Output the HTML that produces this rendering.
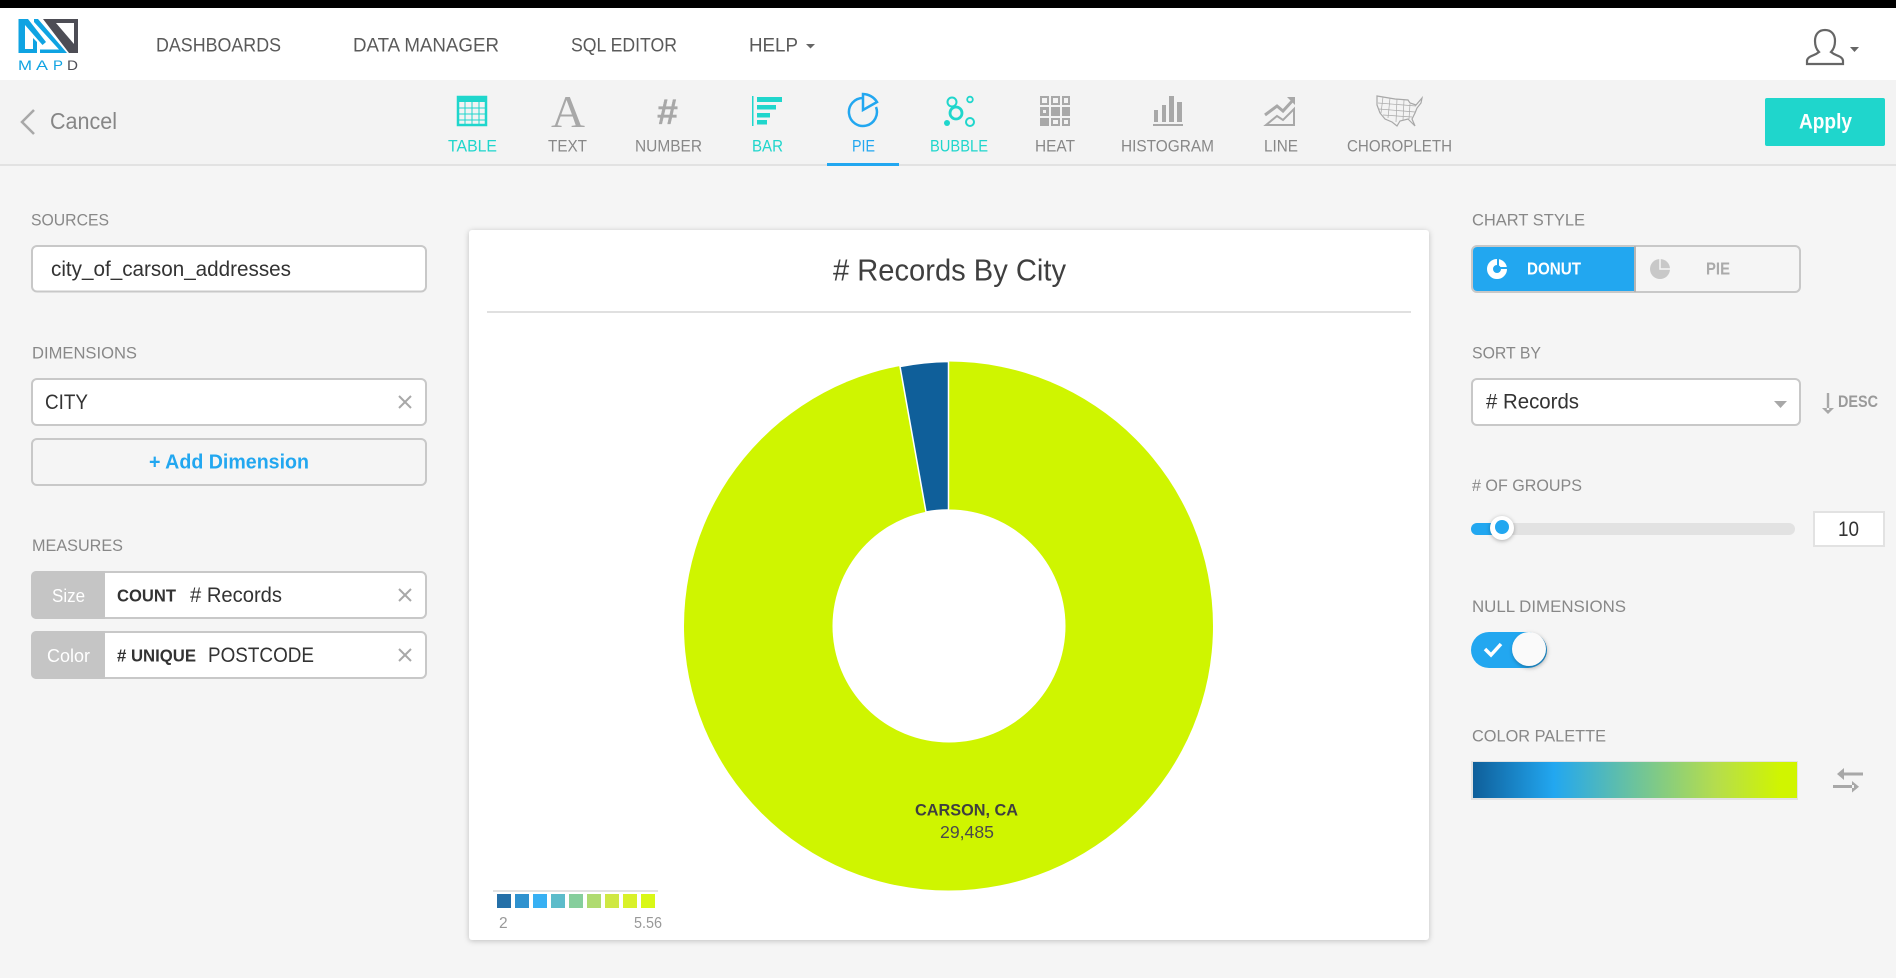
<!DOCTYPE html>
<html lang="en">
<head>
<meta charset="utf-8">
<title>MapD Chart Editor</title>
<style>
html,body{margin:0;padding:0;background:#f4f4f4;width:1896px;height:978px;overflow:hidden}
svg{display:block}
text{font-family:"Liberation Sans",sans-serif;font-size:16px;white-space:pre}
.nav{font-size:19.500px;fill:#5a5a5a}
.lab{font-size:17px;fill:#888}
.tb{font-size:17px;fill:#888}
.tl{fill:#1fd6cc}
.val{font-size:21.500px;fill:#333}
.b{font-weight:bold}
.box{fill:#fff;stroke:#c8c8c8;stroke-width:2}
.x{stroke:#a8a8a8;stroke-width:2;fill:none}
</style>
</head>
<body>
<svg width="1896" height="978" viewBox="0 0 1896 978" xmlns="http://www.w3.org/2000/svg">
<rect width="1896" height="978" fill="#f5f5f5"/>
<rect width="1896" height="8" fill="#000"/>
<rect y="8" width="1896" height="72" fill="#fff"/>
<rect y="80" width="1896" height="84" fill="#f3f3f3"/>
<rect y="164" width="1896" height="2" fill="#e2e2e2"/>

<!-- logo -->
<path fill="#4d4d55" fill-rule="evenodd" d="M43 19H78V53H69ZM56 23L74 44V23Z"/>
<path fill="#0fa3e2" d="M18.500 19H28L46 42L42.500 45L25 25V49H33V38L37 42V53H18.500Z"/>
<path fill="#0fa3e2" d="M34 19H38L67 53H40V49.500H59L34 22Z"/>
<text x="18" y="70" style="font-size:14px;fill:#0fa3e2" textLength="14" lengthAdjust="spacingAndGlyphs">M</text>
<text x="36" y="70" style="font-size:14px;fill:#0fa3e2" textLength="12" lengthAdjust="spacingAndGlyphs">A</text>
<text x="53" y="70" style="font-size:14px;fill:#0fa3e2" textLength="10" lengthAdjust="spacingAndGlyphs">P</text>
<text x="67" y="70" style="font-size:14px;fill:#4d4d55" textLength="11" lengthAdjust="spacingAndGlyphs">D</text>

<!-- nav -->
<text class="nav" x="156" y="51.500" textLength="125" lengthAdjust="spacingAndGlyphs">DASHBOARDS</text>
<text class="nav" x="353" y="51.500" textLength="146" lengthAdjust="spacingAndGlyphs">DATA MANAGER</text>
<text class="nav" x="571" y="51.500" textLength="106" lengthAdjust="spacingAndGlyphs">SQL EDITOR</text>
<text class="nav" x="749" y="51.500" textLength="49" lengthAdjust="spacingAndGlyphs">HELP</text>
<path d="M806 44h9l-4.500 4.500z" fill="#666"/>

<!-- user -->
<path fill="none" stroke="#666" stroke-width="2.200" d="M1807 64v-3c0-4 5-5 9-7l3-2c-3-3-4-7-4-11c0-7 4-11 10-11s10 4 10 11c0 4-1 8-4 11l3 2c4 2 9 3 9 7v3z"/>
<path d="M1850 47h9l-4.500 5z" fill="#666"/>

<!-- cancel -->
<path d="M34 110L22 122L34 134" fill="none" stroke="#a8a8a8" stroke-width="2.500"/>
<text x="50" y="129" style="font-size:23.500px;fill:#868686" textLength="67" lengthAdjust="spacingAndGlyphs">Cancel</text>

<!-- toolbar icons -->
<g fill="none" stroke="#1fd6cc">
  <rect x="458" y="97" width="28" height="28" stroke-width="2.500"/>
  <rect x="458" y="97" width="28" height="4" fill="#1fd6cc" stroke-width="2"/>
  <path stroke-width="1" d="M465 101v24M472 101v24M479 101v24M458 108h28M458 114h28M458 120h28"/>
</g>
<text x="551" y="127" style="font-family:'Liberation Serif',serif;font-size:46px" fill="#a8a8a8" textLength="34" lengthAdjust="spacingAndGlyphs">A</text>
<text x="657" y="124" style="font-size:35px;font-weight:bold" fill="#a8a8a8" stroke="#a8a8a8" stroke-width=".3" textLength="21" lengthAdjust="spacingAndGlyphs">#</text>
<g fill="#1fd6cc">
  <rect x="752" y="96" width="1.500" height="30"/>
  <rect x="757" y="97" width="25" height="5"/>
  <rect x="757" y="105" width="19" height="4.500"/>
  <rect x="757" y="113" width="13" height="4.500"/>
  <rect x="757" y="120" width="10" height="4.500"/>
</g>
<g fill="none" stroke="#22a7f0" stroke-width="2.500">
  <path d="M863 98A14 14 0 1 0 876 107"/>
  <path d="M863 110V94A17 17 0 0 1 877 102Z"/>
</g>
<g fill="none" stroke="#1fd6cc">
  <circle cx="952" cy="102" r="4.500" stroke-width="2"/>
  <circle cx="970" cy="99.500" r="2.800" stroke-width="1.800"/>
  <circle cx="956" cy="113" r="6" stroke-width="2.800"/>
  <circle cx="970" cy="122" r="4" stroke-width="2"/>
  <circle cx="947" cy="123" r="3" fill="#1fd6cc" stroke="none"/>
</g>
<g fill="#a8a8a8">
  <path fill-rule="evenodd" d="M1040 96h9v9h-9zM1042 98v5h5v-5zM1051 96h9v9h-9zM1053 98v5h5v-5zM1062 96h8v9h-8zM1064 98v5h4v-5zM1040 107h9v9h-9zM1043 110v3h3v-3zM1051 107h9v9h-9zM1062 107h8v9h-8zM1040 118h9v8h-9zM1051 118h9v8h-9zM1053 120v4h5v-4zM1062 118h8v8h-8zM1064 120v4h4v-4z"/>
  <rect x="1153" y="124" width="30" height="2"/>
  <rect x="1154" y="110" width="4" height="12"/>
  <rect x="1162" y="105" width="4" height="17"/>
  <rect x="1169" y="96" width="5" height="26"/>
  <rect x="1177" y="102" width="5" height="20"/>
</g>
<g fill="none" stroke="#a8a8a8">
  <path stroke-width="3" d="M1265 115L1277 106L1283 111L1294 99"/>
  <path d="M1287 97L1295 97L1295 105Z" fill="#a8a8a8" stroke="none"/>
  <path stroke-width="2" d="M1266 125L1277 116L1283 120L1294 109V125Z"/>
</g>
<g fill="none" stroke="#a8a8a8">
  <path stroke-width="1.200" d="M1377 96L1395 99L1408 100L1410 103L1416 105L1422 98L1421 103L1417 108L1415 113L1412 119L1415 126L1412 123L1408 119L1400 121L1397 126L1392 122L1385 119L1380 113L1377 105Z"/>
  <path stroke-width=".7" d="M1383 97L1381 113M1390 98L1388 118M1397 99L1396 122M1404 100L1403 120M1410 104L1409 119M1378 103L1416 106M1379 109L1415 112M1383 115L1412 117"/>
</g>

<!-- toolbar labels -->
<text class="tb tl" x="448" y="151.500" textLength="49" lengthAdjust="spacingAndGlyphs">TABLE</text>
<text class="tb" x="548" y="151.500" textLength="39" lengthAdjust="spacingAndGlyphs">TEXT</text>
<text class="tb" x="635" y="151.500" textLength="67" lengthAdjust="spacingAndGlyphs">NUMBER</text>
<text class="tb tl" x="752" y="151.500" textLength="31" lengthAdjust="spacingAndGlyphs">BAR</text>
<text class="tb" x="852" y="151.500" textLength="23" lengthAdjust="spacingAndGlyphs" style="fill:#22a7f0">PIE</text>
<text class="tb tl" x="930" y="151.500" textLength="58" lengthAdjust="spacingAndGlyphs">BUBBLE</text>
<text class="tb" x="1035" y="151.500" textLength="40" lengthAdjust="spacingAndGlyphs">HEAT</text>
<text class="tb" x="1121" y="151.500" textLength="93" lengthAdjust="spacingAndGlyphs">HISTOGRAM</text>
<text class="tb" x="1264" y="151.500" textLength="34" lengthAdjust="spacingAndGlyphs">LINE</text>
<text class="tb" x="1347" y="151.500" textLength="105" lengthAdjust="spacingAndGlyphs">CHOROPLETH</text>
<rect x="827" y="163" width="72" height="3" fill="#22a7f0"/>

<!-- apply -->
<rect x="1765" y="98" width="120" height="48" rx="2" fill="#1fd6cc"/>
<text x="1799" y="128.500" class="b" fill="#fff" textLength="53" lengthAdjust="spacingAndGlyphs" style="font-size:21.500px">Apply</text>

<!-- left panel -->
<text class="lab" x="31" y="225.500" textLength="78" lengthAdjust="spacingAndGlyphs">SOURCES</text>
<rect class="box" x="32" y="246" width="394" height="45.500" rx="5"/>
<text class="val" x="51" y="276" textLength="240" lengthAdjust="spacingAndGlyphs">city_of_carson_addresses</text>

<text class="lab" x="32" y="358.500" textLength="105" lengthAdjust="spacingAndGlyphs">DIMENSIONS</text>
<rect class="box" x="32" y="379" width="394" height="46" rx="5"/>
<text class="val" x="45" y="409" textLength="43" lengthAdjust="spacingAndGlyphs">CITY</text>
<path class="x" d="M399 396l12 12M411 396l-12 12"/>
<rect x="32" y="439" width="394" height="46" rx="5" fill="none" stroke="#c8c8c8" stroke-width="2"/>
<text x="149" y="468.500" class="b" style="font-size:20.500px;fill:#22a7f0" textLength="160" lengthAdjust="spacingAndGlyphs">+ Add Dimension</text>

<text class="lab" x="32" y="551" textLength="91" lengthAdjust="spacingAndGlyphs">MEASURES</text>
<rect class="box" x="32" y="572" width="394" height="46" rx="5"/>
<path d="M36 571H105V619H36a5 5 0 0 1-5-5V576a5 5 0 0 1 5-5Z" fill="#c5c5c5"/>
<text x="52" y="602" style="font-size:18px;fill:#fff" textLength="33" lengthAdjust="spacingAndGlyphs">Size</text>
<text x="117" y="601.500" class="b" style="font-size:17.500px;fill:#333" textLength="59" lengthAdjust="spacingAndGlyphs">COUNT</text>
<text class="val" x="190" y="602" textLength="92" lengthAdjust="spacingAndGlyphs"># Records</text>
<path class="x" d="M399 589l12 12M411 589l-12 12"/>

<rect class="box" x="32" y="632" width="394" height="46" rx="5"/>
<path d="M36 631H105V679H36a5 5 0 0 1-5-5V636a5 5 0 0 1 5-5Z" fill="#c5c5c5"/>
<text x="47" y="662" style="font-size:18px;fill:#fff" textLength="43" lengthAdjust="spacingAndGlyphs">Color</text>
<text x="117" y="661.500" class="b" style="font-size:17.500px;fill:#333" textLength="79" lengthAdjust="spacingAndGlyphs"># UNIQUE</text>
<text class="val" x="208" y="662" textLength="106" lengthAdjust="spacingAndGlyphs">POSTCODE</text>
<path class="x" d="M399 649l12 12M411 649l-12 12"/>

<!-- chart card -->
<rect x="469" y="230" width="960" height="710" rx="3" fill="#fff" style="filter:drop-shadow(0 1px 3px rgba(0,0,0,.22))"/>
<text x="833" y="280.500" style="font-size:30.500px;fill:#3f3f3f" textLength="233" lengthAdjust="spacingAndGlyphs"># Records By City</text>
<rect x="487" y="311" width="924" height="2" fill="#e0e0e0"/>

<circle cx="948.500" cy="626" r="264.500" fill="#cff500"/>
<path d="M948.500 361.500A264.500 264.500 0 0 0 900 366.500L926 512A116 116 0 0 1 948.500 510Z" fill="#0f5f9a" stroke="#fff" stroke-width="1.500"/>
<circle cx="949" cy="626" r="116.500" fill="#fff"/>
<text x="915" y="815.500" class="b" style="font-size:17px;fill:#3f3f3f" textLength="103" lengthAdjust="spacingAndGlyphs">CARSON, CA</text>
<text x="940" y="838" style="font-size:17.500px;fill:#4a4a4a" textLength="54" lengthAdjust="spacingAndGlyphs">29,485</text>

<rect x="493" y="890" width="165" height="2" fill="#e2e2e2"/>
<rect x="497" y="894" width="14" height="14" fill="#2570a8"/>
<rect x="515" y="894" width="14" height="14" fill="#2f92cf"/>
<rect x="533" y="894" width="14" height="14" fill="#38b0f3"/>
<rect x="551" y="894" width="14" height="14" fill="#5cbcca"/>
<rect x="569" y="894" width="14" height="14" fill="#86ce9c"/>
<rect x="587" y="894" width="14" height="14" fill="#afdb70"/>
<rect x="605" y="894" width="14" height="14" fill="#cfe843"/>
<rect x="623" y="894" width="14" height="14" fill="#d9f129"/>
<rect x="641" y="894" width="14" height="14" fill="#d9f816"/>
<text x="499" y="928" style="font-size:15.500px;fill:#999">2</text>
<text x="634" y="928" style="font-size:15.500px;fill:#999" textLength="28" lengthAdjust="spacingAndGlyphs">5.56</text>

<!-- right panel -->
<text class="lab" x="1472" y="225.500" textLength="113" lengthAdjust="spacingAndGlyphs">CHART STYLE</text>
<rect x="1472" y="246" width="328" height="46" rx="5" fill="#f5f5f5" stroke="#c8c8c8" stroke-width="2"/>
<path d="M1477 247H1634V291H1477a4 4 0 0 1-4-4V251a4 4 0 0 1 4-4Z" fill="#22a7f0"/>
<rect x="1634" y="246" width="2" height="46" fill="#b5b5b5"/>
<circle cx="1497" cy="269" r="7" fill="none" stroke="#fff" stroke-width="6"/>
<path d="M1497 269V258h2V267h10v2Z" fill="#22a7f0"/>
<text x="1527" y="274.500" class="b" style="font-size:17.500px;fill:#fff" textLength="54" lengthAdjust="spacingAndGlyphs">DONUT</text>
<circle cx="1660" cy="269" r="10" fill="#c8c8c8"/>
<path d="M1660 259V269H1670" fill="none" stroke="#f5f5f5" stroke-width="1.500"/>
<text x="1706" y="274.500" class="b" style="font-size:17.500px;fill:#aaa" textLength="24" lengthAdjust="spacingAndGlyphs">PIE</text>

<text class="lab" x="1472" y="358.500" textLength="69" lengthAdjust="spacingAndGlyphs">SORT BY</text>
<rect class="box" x="1472" y="379" width="328" height="46" rx="5"/>
<text class="val" x="1486" y="408.500" textLength="93" lengthAdjust="spacingAndGlyphs"># Records</text>
<path d="M1774 401h13l-6.500 7z" fill="#a8a8a8"/>
<path d="M1826.800 393h2.400v17h-2.400z M1822 408l6 6 6-6z" fill="#a8a8a8"/>
<text x="1838" y="407" class="b" style="font-size:17px;fill:#9a9a9a" textLength="40" lengthAdjust="spacingAndGlyphs">DESC</text>

<text class="lab" x="1472" y="491" textLength="110" lengthAdjust="spacingAndGlyphs"># OF GROUPS</text>
<rect x="1471" y="523" width="324" height="12" rx="6" fill="#e2e2e2"/>
<path d="M1477 523H1502V535H1477a6 6 0 0 1 0-12Z" fill="#22a7f0"/>
<circle cx="1502" cy="528" r="12" fill="#fff" style="filter:drop-shadow(0 1px 2px rgba(0,0,0,.3))"/>
<circle cx="1502" cy="527" r="7" fill="#22a7f0"/>
<rect x="1814" y="512" width="70" height="34" fill="#fff" stroke="#e2e2e2" stroke-width="2"/>
<text x="1838" y="536" class="val" textLength="21" lengthAdjust="spacingAndGlyphs">10</text>

<text class="lab" x="1472" y="612" textLength="154" lengthAdjust="spacingAndGlyphs">NULL DIMENSIONS</text>
<rect x="1471" y="632" width="75" height="36" rx="18" fill="#22a7f0"/>
<path d="M1485 649L1491 655L1501 644" fill="none" stroke="#fff" stroke-width="3.500"/>
<circle cx="1530" cy="650" r="17" fill="#1b7fb8" style="filter:drop-shadow(0 1px 2px rgba(0,0,0,.3))"/>
<circle cx="1529" cy="649" r="17" fill="#fafafa"/>

<text class="lab" x="1472" y="741.500" textLength="134" lengthAdjust="spacingAndGlyphs">COLOR PALETTE</text>
<defs><linearGradient id="pal" x1="0" x2="1" y1="0" y2="0">
<stop offset="0" stop-color="#0f5f9a"/><stop offset=".25" stop-color="#22a7f0"/><stop offset=".5" stop-color="#6cc39c"/><stop offset=".75" stop-color="#b5dd4d"/><stop offset=".95" stop-color="#d0f500"/><stop offset="1" stop-color="#d0f500"/></linearGradient></defs>
<rect x="1471" y="761" width="327" height="39" fill="#e2e2e2"/>
<rect x="1473" y="762" width="324" height="36" fill="url(#pal)"/>
<path d="M1842 772.500h21v3h-21zM1844 768v12l-7-6zM1833 785h21v3h-21zM1852 781v11.500l7-5.750z" fill="#a8a8a8"/>
</svg>
</body>
</html>
